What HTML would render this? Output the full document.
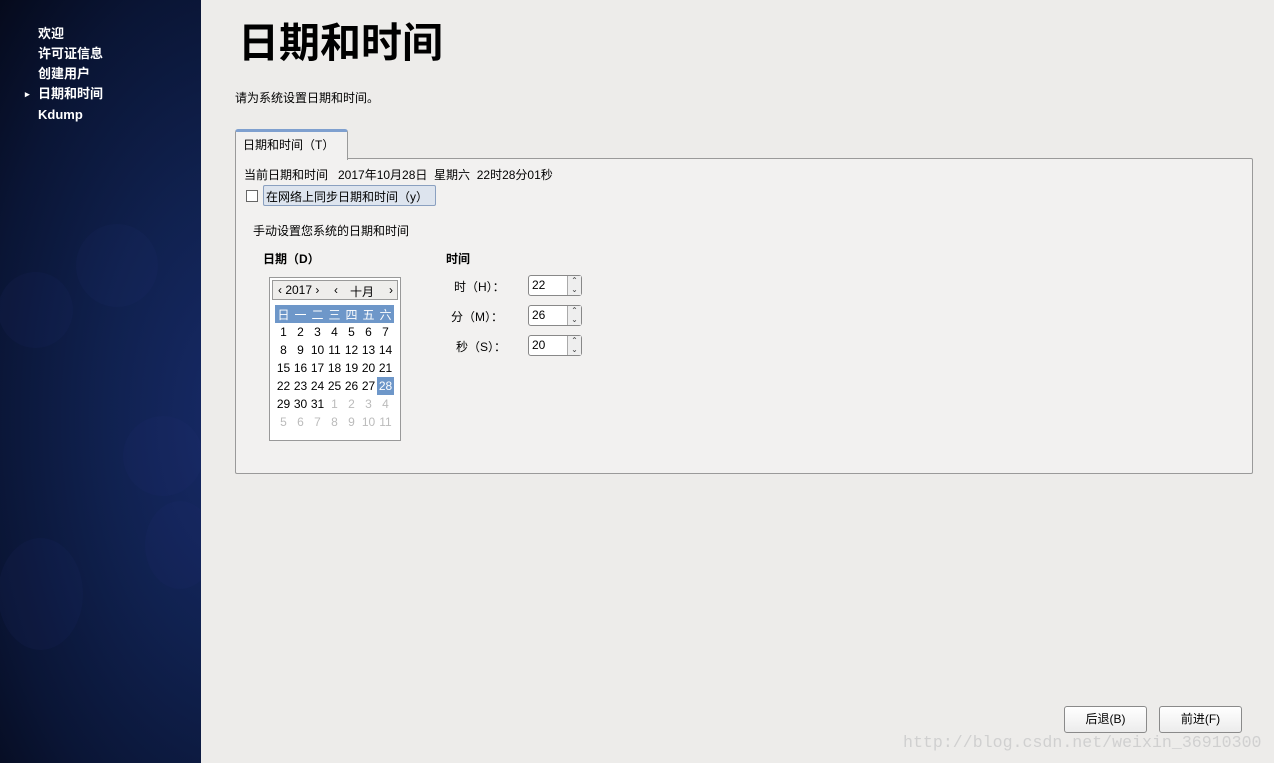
<!DOCTYPE html>
<html><head><meta charset="utf-8"><style>
*{margin:0;padding:0;box-sizing:border-box}
body{width:1274px;height:763px;overflow:hidden;background:#edecea;font-family:"Liberation Sans","Noto Sans CJK SC",sans-serif;font-size:12px;color:#000;position:relative}
.abs{position:absolute}
#side{left:0;top:0;width:201px;height:763px;background:radial-gradient(ellipse at 120% 55%,#172a68 0%,#10214f 40%,#0a1535 75%,#050a1c 100%);overflow:hidden}
.blob{position:absolute;border-radius:50%;background:rgba(40,60,130,0.09)}
.nav{position:absolute;left:38px;color:#fff;font-weight:bold;font-size:13px;line-height:20px}
.cal td{width:17px;height:18px;text-align:center;font-size:12px;padding:0}
.spin{position:absolute;left:528px;width:54px;height:21px;border:1px solid #888;border-radius:3px;background:#fff}
.spin span{position:absolute;left:3px;top:2px;font-size:12px}
.spin i{position:absolute;right:0;top:0;width:14px;height:19px;border-left:1px solid #aaa;background:#eee;font-style:normal;font-size:8px;line-height:9px;text-align:center;color:#444}
.btn{position:absolute;top:706px;width:83px;height:27px;border:1px solid #8a8a8a;border-radius:3px;background:linear-gradient(#fff,#ececec);text-align:center;line-height:25px;font-size:12px}
</style></head><body>
<div id="side" class="abs">
<div class="blob" style="left:76px;top:224px;width:82px;height:83px"></div>
<div class="blob" style="left:-2px;top:272px;width:75px;height:76px"></div>
<div class="blob" style="left:123px;top:416px;width:80px;height:80px"></div>
<div class="blob" style="left:145px;top:501px;width:70px;height:88px"></div>
<div class="blob" style="left:-2px;top:538px;width:85px;height:112px"></div>
<div class="nav" style="top:24px">欢迎</div>
<div class="nav" style="top:44px">许可证信息</div>
<div class="nav" style="top:64px">创建用户</div>
<div class="nav" style="top:84px;left:25px;font-size:9px">▸</div>
<div class="nav" style="top:84px">日期和时间</div>
<div class="nav" style="top:105px">Kdump</div>
</div>
<div class="abs" style="left:238px;top:17px;font-size:41px;font-weight:bold;line-height:52px">日期和时间</div>
<div class="abs" style="left:235px;top:89px">请为系统设置日期和时间。</div>
<div class="abs" style="left:235px;top:158px;width:1018px;height:316px;border:1px solid #9a9a9a;border-radius:2px;background:#f2f1f0"></div>
<div class="abs" style="left:235px;top:129px;width:113px;height:31px;border:1px solid #9a9a9a;border-bottom:none;border-top:3px solid #7fa0cf;border-radius:3px 3px 0 0;background:#f2f1f0;padding:4px 0 0 7px">日期和时间（T）</div>
<div class="abs" style="left:244px;top:166px">当前日期和时间&nbsp;&nbsp;&nbsp;2017年10月28日&nbsp;&nbsp;星期六&nbsp;&nbsp;22时28分01秒</div>
<div class="abs" style="left:246px;top:190px;width:12px;height:12px;border:1px solid #666;background:#fff"></div>
<div class="abs" style="left:263px;top:185px;width:173px;height:21px;border:1px solid #8aa0c0;border-radius:2px;background:#dde4ee;padding:2px 0 0 2px">在网络上同步日期和时间（y）</div>
<div class="abs" style="left:253px;top:222px">手动设置您系统的日期和时间</div>
<div class="abs" style="left:263px;top:250px;font-weight:bold">日期（D）</div>
<div class="abs" style="left:446px;top:250px;font-weight:bold">时间</div>
<div class="abs" style="left:269px;top:277px;width:132px;height:164px;border:1px solid #999;background:#fff">
<div style="margin:2px;height:20px;border:1px solid #999;background:#eeedeb;position:relative;font-size:12px">
<span class="abs" style="left:5px;top:2px">‹ 2017 ›</span><span class="abs" style="left:61px;top:2px">‹</span><span class="abs" style="left:77px;top:2px">十月</span><span class="abs" style="left:116px;top:2px">›</span></div>
<table class="cal" style="border-collapse:collapse;margin-left:5px;margin-top:5px">
<tr style="background:#6e97c9;color:#fff"><td>日</td><td>一</td><td>二</td><td>三</td><td>四</td><td>五</td><td>六</td></tr>
<tr><td>1</td><td>2</td><td>3</td><td>4</td><td>5</td><td>6</td><td>7</td></tr>
<tr><td>8</td><td>9</td><td>10</td><td>11</td><td>12</td><td>13</td><td>14</td></tr>
<tr><td>15</td><td>16</td><td>17</td><td>18</td><td>19</td><td>20</td><td>21</td></tr>
<tr><td>22</td><td>23</td><td>24</td><td>25</td><td>26</td><td>27</td><td style="background:#6e97c9;color:#fff">28</td></tr>
<tr><td>29</td><td>30</td><td>31</td><td style="color:#bbb">1</td><td style="color:#bbb">2</td><td style="color:#bbb">3</td><td style="color:#bbb">4</td></tr>
<tr style="color:#bbb"><td>5</td><td>6</td><td>7</td><td>8</td><td>9</td><td>10</td><td>11</td></tr>
</table></div>
<div class="abs" style="left:454px;top:278px">时（H）：</div>
<div class="abs" style="left:451px;top:308px">分（M）：</div>
<div class="abs" style="left:456px;top:338px">秒（S）：</div>
<div class="spin" style="top:275px"><span>22</span><i>⌃<br>⌄</i></div>
<div class="spin" style="top:305px"><span>26</span><i>⌃<br>⌄</i></div>
<div class="spin" style="top:335px"><span>20</span><i>⌃<br>⌄</i></div>
<div class="btn" style="left:1064px">后退(B)</div>
<div class="btn" style="left:1159px">前进(F)</div>
<div class="abs" style="left:903px;top:733px;font-family:'Liberation Mono',monospace;font-size:16.6px;color:#d0d0d0">http://blog.csdn.net/weixin_36910300</div>
</body></html>
